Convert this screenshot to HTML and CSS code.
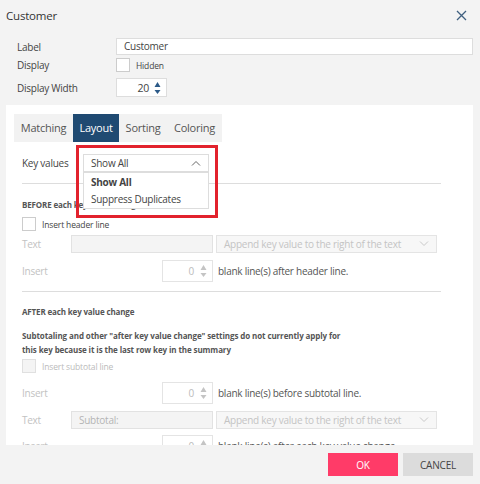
FILE: index.html
```html
<!DOCTYPE html>
<html>
<head>
<meta charset="utf-8">
<link rel="stylesheet" href="styles.css">
</head>
<body>
<div class="dialog">
  <div class="header">
    <span class="title">Customer</span>
    <svg class="close" width="11" height="11" viewBox="0 0 11 11"><path d="M1 1L10 10M10 1L1 10" stroke="#3f5f7f" stroke-width="1.3" fill="none"/></svg>
  </div>
  <div class="props">
    <div class="prow r1"><span class="plabel">Label</span><div class="textbox">Customer</div></div>
    <div class="prow r2"><span class="plabel">Display</span><span class="cb"></span><span class="small">Hidden</span></div>
    <div class="prow r3"><span class="plabel">Display Width</span>
      <div class="num"><span class="numval">20</span>
        <svg class="spin" width="7" height="14" viewBox="0 0 7 14"><path d="M3.5 1L6.5 6H0.5Z M0.5 9H6.5L3.5 13Z" fill="#2c5a88"/></svg>
      </div>
    </div>
  </div>
  <div class="panel">
    <div class="tabs">
      <span class="tab t1">Matching</span><span class="tab t2 active">Layout</span><span class="tab t3">Sorting</span><span class="tab t4">Coloring</span>
    </div>
    <div class="content">
      <div class="keyrow">
        <span class="klabel">Key values</span>
        <div class="select">
          <span>Show All</span>
          <svg width="10" height="6" viewBox="0 0 10 6"><path d="M1 5.5L5 1.5L9 5.5" stroke="#666" stroke-width="1" fill="none"/></svg>
          <div class="list">
            <div class="opt bold">Show All</div>
            <div class="opt">Suppress Duplicates</div>
          </div>
        </div>
        <div class="highlight"></div>
      </div>
      <div class="rule rule1"></div>
      <div class="sec before">BEFORE each key value change</div>
      <div class="cbrow"><span class="cb"></span><span class="small">Insert header line</span></div>
      <div class="frow text1">
        <span class="flabel dis">Text</span>
        <div class="dinput"></div>
        <div class="dselect"><span>Append key value to the right of the text</span>
          <svg width="10" height="6" viewBox="0 0 10 6"><path d="M1 0.5L5 4.5L9 0.5" stroke="#c8c8c8" stroke-width="1" fill="none"/></svg>
        </div>
      </div>
      <div class="frow ins1">
        <span class="flabel dis">Insert</span>
        <div class="dnum"><span>0</span>
          <svg class="spin" width="7" height="14" viewBox="0 0 7 14"><path d="M3.5 1L6.5 6H0.5Z M0.5 9H6.5L3.5 13Z" fill="#c4c4c4"/></svg>
        </div>
        <span class="after">blank line(s) after header line.</span>
      </div>
      <div class="rule rule2"></div>
      <div class="sec aftersec">AFTER each key value change</div>
      <div class="para">Subtotaling and other "after key value change" settings do not currently apply for this key because it is the last row key in the summary</div>
      <div class="cbrow cbrow2"><span class="cb dis"></span><span class="small dis">Insert subtotal line</span></div>
      <div class="frow ins2">
        <span class="flabel dis">Insert</span>
        <div class="dnum"><span>0</span>
          <svg class="spin" width="7" height="14" viewBox="0 0 7 14"><path d="M3.5 1L6.5 6H0.5Z M0.5 9H6.5L3.5 13Z" fill="#c4c4c4"/></svg>
        </div>
        <span class="after">blank line(s) before subtotal line.</span>
      </div>
      <div class="frow text2">
        <span class="flabel dis">Text</span>
        <div class="dinput">Subtotal:</div>
        <div class="dselect"><span>Append key value to the right of the text</span>
          <svg width="10" height="6" viewBox="0 0 10 6"><path d="M1 0.5L5 4.5L9 0.5" stroke="#c8c8c8" stroke-width="1" fill="none"/></svg>
        </div>
      </div>
      <div class="frow ins3">
        <span class="flabel dis">Insert</span>
        <div class="dnum"><span>0</span>
          <svg class="spin" width="7" height="14" viewBox="0 0 7 14"><path d="M3.5 1L6.5 6H0.5Z M0.5 9H6.5L3.5 13Z" fill="#c4c4c4"/></svg>
        </div>
        <span class="after">blank line(s) after each key value change.</span>
      </div>
    </div>
  </div>
  <div class="footer">
    <button class="btn ok">OK</button>
    <button class="btn cancel">CANCEL</button>
  </div>
</div>
</body>
</html>
```
FILE: styles.css
```css
* { box-sizing: border-box; }
html, body { margin: 0; padding: 0; }
body {
  width: 480px; height: 484px; overflow: hidden;
  background: #f3f3f3;
  font-family: "Open Sans", "Noto Sans", sans-serif;
  color: #333;
}
.dialog { width: 480px; height: 484px; display: flex; flex-direction: column; }
.header {
  height: 30px; display: flex; align-items: center; justify-content: space-between;
  padding: 0 13px 0 6px;
}
.title { font-size: 11.5px; color: #333; letter-spacing: -0.2px; }
.close { display: block; }
.props { padding: 8px 7px 0 17px; height: 75px; }
.prow { display: flex; align-items: center; font-size: 10px; letter-spacing: -0.25px; }
.plabel { width: 99px; color: #444; }
.r1 { height: 17px; }
.r2 { height: 14px; margin-top: 3px; }
.r3 { height: 19px; margin-top: 6px; }
.textbox {
  flex: 1; height: 17px; background: #fff; border: 1px solid #ddd;
  padding-left: 7px; line-height: 15px; color: #444;
}
.cb { width: 14px; height: 14px; background: #fff; border: 1px solid #ccc; display: inline-block; }
.cb.dis { background: #f4f4f4; border-color: #e0e0e0; }
.small { font-size: 8.5px; margin-left: 6px; color: #444; letter-spacing: -0.15px; }
.small.dis { color: #bbb; }
.num {
  width: 51px; height: 19px; background: #fff; border: 1px solid #ddd;
  display: flex; align-items: center; justify-content: flex-end; padding-right: 5px;
}
.numval { margin-right: 5px; color: #444; font-size: 10.5px; }
.spin { display: block; }
.panel {
  margin: 0 7px 0 6px; height: 340px; background: #fff; overflow: hidden;
  padding: 9px 0 0 8px;
}
.tabs { display: flex; width: 208px; height: 28px; background: #f2f2f2; }
.tab { height: 28px; line-height: 28px; font-size: 11px; color: #555; text-align: center; letter-spacing: -0.25px; }
.t1 { width: 59px; }
.t2 { width: 46px; }
.t3 { width: 48px; }
.t4 { width: 55px; }
.tab.active { background: #1f4a72; color: #fff; }
.content { padding-left: 8px; width: 427px; font-size: 10px; color: #444; letter-spacing: -0.25px; }
.keyrow { position: relative; display: flex; align-items: center; margin-top: 12px; height: 18px; }
.klabel { width: 61px; }
.select {
  position: relative; width: 126px; height: 18px; border: 1px solid #ddd; background: #fff;
  display: flex; align-items: center; justify-content: space-between; padding: 0 7px;
  z-index: 2;
}
.list {
  position: absolute; left: -1px; top: 17px; width: 126px; height: 37px;
  background: #fff; border: 1px solid #ddd; padding-top: 1px;
}
.opt { height: 17px; line-height: 17px; padding-left: 7px; }
.opt.bold { font-weight: bold; }
.highlight {
  position: absolute; left: 54px; top: -9px; width: 142px; height: 73px;
  border: 3px solid #e2222d; z-index: 3;
}
.rule { height: 1px; background: #ddd; width: 419px; }
.rule1 { margin-top: 11px; }
.sec { font-size: 8px; font-weight: bold; color: #555; letter-spacing: -0.15px; }
.before { margin-top: 15px; height: 12px; line-height: 12px; }
.cbrow { display: flex; align-items: center; height: 14px; margin-top: 6px; }
.cbrow .small { margin-left: 6px; }
.frow { display: flex; align-items: center; }
.flabel { width: 49px; }
.dis { color: #c2c2c2; }
.text1 { margin-top: 4px; height: 18px; }
.dinput {
  width: 142px; height: 18px; background: #f4f4f4; border: 1px solid #e2e2e2;
  padding-left: 7px; line-height: 16px; color: #b4b4b4;
}
.dselect {
  width: 221px; height: 18px; margin-left: 3px; background: #f7f7f7; border: 1px solid #e4e4e4;
  display: flex; align-items: center; justify-content: space-between; padding: 0 7px;
  color: #c4c4c4;
}
.dnum {
  width: 51px; height: 22px; margin-left: 91px; background: #fff; border: 1px solid #e4e4e4;
  display: flex; align-items: center; justify-content: flex-end; padding-right: 5px;
  color: #bbb;
}
.dnum span { margin-right: 6px; }
.after { margin-left: 5px; color: #555; }
.ins1 { margin-top: 7px; height: 22px; }
.rule2 { margin-top: 9px; }
.aftersec { margin-top: 14px; height: 12px; line-height: 12px; }
.para { margin-top: 11px; font-size: 8px; font-weight: bold; color: #555; line-height: 14px; width: 325px; letter-spacing: -0.1px; }
.cbrow2 { margin-top: 2px; }
.ins2 { margin-top: 9px; height: 22px; }
.text2 { margin-top: 7px; height: 18px; }
.ins3 { margin-top: 6px; height: 22px; }
.footer {
  flex: 1; display: flex; justify-content: flex-end; align-items: flex-start;
  padding: 8px 7px 0 0; gap: 5px;
}
.btn {
  width: 70px; height: 23px; border: none; font-family: inherit; font-size: 10px;
  letter-spacing: -0.2px; padding: 0; cursor: pointer;
}
.ok { background: #ff3b68; color: #fff; }
.cancel { background: #dcdcdc; color: #444; }
```
